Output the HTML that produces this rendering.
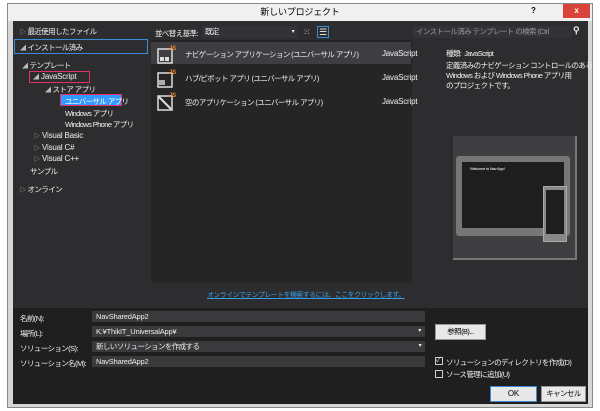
<!DOCTYPE html>
<html><head><meta charset="utf-8"><style>
*{margin:0;padding:0;box-sizing:border-box}
body{width:600px;height:411px;background:#fff;font-family:"Liberation Sans","Noto Sans CJK JP",sans-serif;font-size:8px;color:#f1f1f1;position:relative;overflow:hidden;letter-spacing:-0.2px}
.a{position:absolute;white-space:pre}
.j{font-size:7.5px;letter-spacing:-0.6px}
.win{left:7px;top:3px;width:586px;height:405px;background:#d6d6d6;border:1px solid #888}
.title{left:8px;top:4px;width:584px;height:17px;background:#f0f0f0;color:#000;font-size:9px;text-align:center;line-height:17px}
.main{left:13px;top:21px;width:575px;height:287px;background:#2d2d30}
.bot{left:13px;top:308px;width:575px;height:96px;background:#1f1f20}
.list{left:151px;top:40px;width:261px;height:243px;background:#252526}
.in{background:#3a3a3d;height:11px;line-height:11px;padding-left:4px;color:#eee;font-size:7.5px}
.tri{font-size:6px;color:#bbb;letter-spacing:0}
.btn{background:#e8e8e8;color:#000;border:1px solid #9a9a9a;text-align:center;line-height:14px;height:16px}
</style></head><body>
<div class="a win"></div>
<div class="a title">新しいプロジェクト</div>
<div class="a" style="left:531px;top:6px;color:#000;font-size:8px;font-weight:bold">?</div>
<div class="a" style="left:563px;top:4px;width:27px;height:14px;background:#d9433a;color:#fff;text-align:center;line-height:14px;font-weight:bold">x</div>
<div class="a main"></div>
<div class="a bot"></div>
<div class="a list"></div>
<div class="a j" style="left:20px;top:26px"><span class="tri">▷</span> 最近使用したファイル</div>
<div class="a" style="left:14px;top:39px;width:134px;height:15px;border:1px solid #3b8ad6"></div>
<div class="a j" style="left:20px;top:42px"><span class="tri">◢</span> インストール済み</div>
<div class="a j" style="left:22px;top:60px"><span class="tri">◢</span> テンプレート</div>
<div class="a" style="left:29px;top:71px;width:61px;height:12px;border:1.5px solid #e0306a"></div>
<div class="a" style="left:33px;top:72px"><span class="tri">◢</span> JavaScript</div>
<div class="a j" style="left:45px;top:84px"><span class="tri">◢</span> ストア アプリ</div>
<div class="a" style="left:60px;top:94px;width:62px;height:12px;border:1.5px solid #e0306a;background:#3399ff"></div>
<div class="a j" style="left:65px;top:96px;color:#fff">ユニバーサル アプリ</div>
<div class="a j" style="left:65px;top:108px">Windows アプリ</div>
<div class="a j" style="left:65px;top:119px">Windows Phone アプリ</div>
<div class="a" style="left:34px;top:131px"><span class="tri">▷</span> Visual Basic</div>
<div class="a" style="left:34px;top:143px"><span class="tri">▷</span> Visual C#</div>
<div class="a" style="left:34px;top:154px"><span class="tri">▷</span> Visual C++</div>
<div class="a j" style="left:30px;top:166px">サンプル</div>
<div class="a j" style="left:20px;top:184px"><span class="tri">▷</span> オンライン</div>
<div class="a j" style="left:155px;top:28px">並べ替え基準:</div>
<div class="a j" style="left:202px;top:26px;width:95px;height:12px;background:#333337;padding-left:3px;line-height:12px">既定<span style="position:absolute;right:3px;font-size:6px">▾</span></div>
<div class="a" style="left:303px;top:27px;font-size:9px;color:#ccc">⁙</div>
<div class="a" style="left:317px;top:26px;width:12px;height:12px;border:1px solid #3b8ad6;font-size:9px;line-height:10px;text-align:center">☰</div>
<div class="a j" style="left:413px;top:26px;width:158px;height:12px;background:#333337;color:#999;padding-left:3px;line-height:12px;overflow:hidden">インストール済み テンプレート の検索 (Ctrl</div>
<div class="a" style="left:573px;top:25px;font-size:9px;font-weight:bold">⚲</div>
<div class="a" style="left:151px;top:42px;width:260px;height:22px;background:#3e3e42"></div>
<svg class="a" style="left:156px;top:43px" width="22" height="22"><rect x="2" y="6" width="14" height="14" fill="none" stroke="#ddd" stroke-width="1.5"/><rect x="4" y="14" width="4" height="4" fill="#ddd"/><rect x="9" y="14" width="4" height="4" fill="#ddd"/><text x="13" y="7" font-size="6" fill="#e8862a" font-family="Liberation Sans" font-weight="bold">JS</text></svg>
<div class="a j" style="left:185px;top:49px">ナビゲーション アプリケーション (ユニバーサル アプリ)</div>
<div class="a" style="left:382px;top:49px">JavaScript</div>
<svg class="a" style="left:156px;top:67px" width="22" height="22"><rect x="2" y="6" width="14" height="14" fill="none" stroke="#ddd" stroke-width="1.5"/><rect x="3" y="13" width="6" height="5" fill="#aaa"/><text x="13" y="7" font-size="6" fill="#e8862a" font-family="Liberation Sans" font-weight="bold">JS</text></svg>
<div class="a j" style="left:185px;top:73px">ハブ/ピボット アプリ (ユニバーサル アプリ)</div>
<div class="a" style="left:382px;top:73px">JavaScript</div>
<svg class="a" style="left:156px;top:90px" width="22" height="22"><rect x="2" y="6" width="14" height="14" fill="none" stroke="#ddd" stroke-width="1.5"/><path d="M3 7 L15 19" stroke="#ddd" stroke-width="2"/><text x="13" y="7" font-size="6" fill="#e8862a" font-family="Liberation Sans" font-weight="bold">JS</text></svg>
<div class="a j" style="left:185px;top:97px">空のアプリケーション (ユニバーサル アプリ)</div>
<div class="a" style="left:382px;top:97px">JavaScript</div>
<div class="a j" style="left:446px;top:48px">種類:  JavaScript</div>
<div class="a j" style="left:446px;top:61px;line-height:10px">定義済みのナビゲーション コントロールのある
Windows および Windows Phone アプリ用
のプロジェクトです。</div>
<div class="a" style="left:453px;top:136px;width:124px;height:124px;background:#3f3f42;border-right:2px solid #777;border-bottom:2px solid #777"></div>
<div class="a" style="left:456px;top:156px;width:114px;height:80px;background:#777;border-radius:3px"></div>
<div class="a" style="left:462px;top:162px;width:102px;height:66px;background:#1e1e1e"></div>
<div class="a" style="left:470px;top:166px;font-size:4px;color:#fff">Welcome to Nav App!</div>
<div class="a" style="left:543px;top:186px;width:24px;height:56px;background:#888;border:1px solid #aaa"></div>
<div class="a" style="left:546px;top:190px;width:18px;height:44px;background:#1e1e1e"></div>
<div class="a j" style="left:207px;top:290px;color:#3a9ee6;text-decoration:underline;font-size:7px">オンラインでテンプレートを検索するには、ここをクリックします。</div>
<div class="a j" style="left:20px;top:313px">名前(N):</div>
<div class="a in" style="left:92px;top:311px;width:333px">NavSharedApp2</div>
<div class="a j" style="left:20px;top:328px">場所(L):</div>
<div class="a in" style="left:92px;top:326px;width:333px">K:¥ThikIT_UniversalApp¥<span style="position:absolute;right:4px;font-size:6px">▾</span></div>
<div class="a btn j" style="left:435px;top:324px;width:51px">参照(B)...</div>
<div class="a j" style="left:20px;top:343px">ソリューション(S):</div>
<div class="a in j" style="left:92px;top:341px;width:333px">新しいソリューションを作成する<span style="position:absolute;right:4px;font-size:6px">▾</span></div>
<div class="a j" style="left:20px;top:358px">ソリューション名(M):</div>
<div class="a in" style="left:92px;top:356px;width:333px">NavSharedApp2</div>
<div class="a" style="left:435px;top:357px;width:8px;height:8px;border:1px solid #ccc;font-size:7px;line-height:6px">✓</div>
<div class="a j" style="left:446px;top:357px">ソリューションのディレクトリを作成(D)</div>
<div class="a" style="left:435px;top:370px;width:8px;height:8px;border:1px solid #ccc"></div>
<div class="a j" style="left:446px;top:369px">ソース管理に追加(U)</div>
<div class="a btn" style="left:490px;top:386px;width:47px;border-color:#3b8ad6">OK</div>
<div class="a btn j" style="left:541px;top:386px;width:45px">キャンセル</div>
</body></html>
